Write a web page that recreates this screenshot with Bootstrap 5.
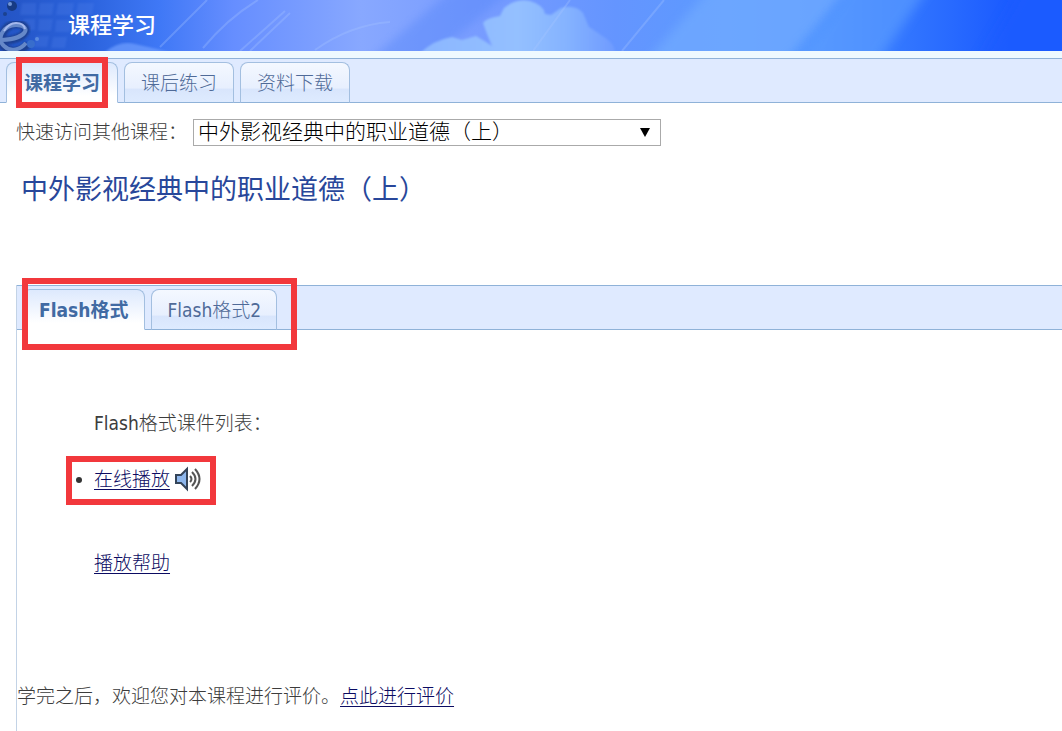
<!DOCTYPE html>
<html lang="zh-CN">
<head>
<meta charset="utf-8">
<meta name="viewport" content="width=device-width, initial-scale=1">
<title>课程学习</title>
<link href="https://cdn.jsdelivr.net/npm/bootstrap@5.3.0/dist/css/bootstrap.min.css" rel="stylesheet">
<style>
  :root { --line: #8fb2d8; --strip: #dfeaff; --ink: #416aa3; }
  body { font-family: "DejaVu Sans Condensed", "Noto Sans CJK SC", sans-serif; font-size: 19px; line-height: 28px; font-weight: 300; color: #3c3c3c; background: #fff; overflow-x: hidden; }
  a { color: #0b0b62; text-underline-offset: 3px; }
  .banner { height: 51px; background: #5c8dff; overflow: hidden; }
  .banner svg { position: absolute; inset: 0; width: 100%; height: 100%; }
  .banner h1 { font-size: 22px; line-height: 51px; font-weight: 500; padding-left: 68px; color: #fff; }
  .spacer { height: 7px; background: #eef9ff; }
  .tabstrip { background: var(--strip); border-top: 1px solid var(--line); border-bottom: 1px solid var(--line); padding: 3px 6px 0; gap: 6px; flex-wrap: nowrap; }
  .tabstrip .nav-link { height: 41px; padding: 0 16px; margin-bottom: -1px; border: 1px solid #a3bfe0; border-bottom-color: var(--line); border-radius: 8px 8px 0 0; color: #4f6a98; line-height: 40px; white-space: nowrap; background: linear-gradient(#f4f8ff 0, #e7effe 65%, #d8e5fc 66%, #deebff 100%); }
  .tabstrip .nav-link.active { padding: 0 17px; color: var(--ink); font-weight: 700; background: linear-gradient(#dde9fd, #fff 85%); border-color: #a3bfe0 #a3bfe0 #fff; }
  .marked { position: relative; }
  .marked::after { content: ""; position: absolute; z-index: 2; border: 6px solid #f2383c; pointer-events: none; }
  .mark-tab::after { inset: -5px 10px -6px 10px; }
  .mark-group::after { inset: -11px -20px -21px 0; }
  .mark-play::after { inset: -9px -14px -12px -28px; }
  .quick-form { padding: 15px 16px 0; gap: 6px; }
  .course-select { width: 468px; height: 27px; padding: 0 4px; font-size: 21px; font-weight: 300; line-height: 25px; border: 1px solid #aaa; border-radius: 0; color: #000; background: #fff url("data:image/svg+xml,%3Csvg xmlns='http://www.w3.org/2000/svg' viewBox='0 0 10 9'%3E%3Cpath d='M0 0h10L5 9z'/%3E%3C/svg%3E") no-repeat right 10px center / 10px 9px; }
  .course-title { margin: 26px 0 0 21px; font-size: 27px; line-height: 36px; font-weight: 400; color: #28479a; }
  .format-panel { margin: 77px 0 0 16px; border-left: 1px solid #c3d3e6; min-height: 446px; }
  .format-panel .tabstrip { padding-left: 5px; }
  .format-panel .tabstrip .nav-link { padding: 0 15px; }
  .format-panel .tabstrip .nav-link.active { padding: 0 16px; }
  .format-panel .marked { gap: 6px; }
  .courseware { padding: 79px 0 0 77px; }
  .courseware p { margin-bottom: 28px; }
  .courseware ul { list-style: none; padding: 0; margin-bottom: 56px; }
  .courseware li::before { content: ""; position: absolute; left: -18px; top: 12px; width: 6px; height: 6px; border-radius: 50%; background: #333; }
  .review { padding: 105px 0 0; }
</style>
</head>
<body>
<header class="banner position-relative">
  <svg viewBox="0 0 1062 51" preserveAspectRatio="none" aria-hidden="true">
    <defs>
      <linearGradient id="sky"><stop offset="0" stop-color="#2454c4"/><stop offset=".08" stop-color="#2a62dc"/><stop offset=".15" stop-color="#3f78f6"/><stop offset=".22" stop-color="#668eff"/><stop offset=".34" stop-color="#88a8ff"/><stop offset=".45" stop-color="#789cff"/><stop offset=".58" stop-color="#6495ff"/><stop offset=".7" stop-color="#5b9bff"/><stop offset=".77" stop-color="#4f93ff"/><stop offset=".84" stop-color="#3579ff"/><stop offset=".95" stop-color="#1b5bff"/><stop offset="1" stop-color="#1b5bff"/></linearGradient>
      <linearGradient id="cloud"><stop offset="0" stop-color="#8bb6ff"/><stop offset=".5" stop-color="#94c0ff"/><stop offset=".75" stop-color="#85b3ff"/><stop offset="1" stop-color="#6f9bff"/></linearGradient>
      <filter id="soft" x="-20%" width="140%"><feGaussianBlur stdDeviation="7 0"/></filter>
      <filter id="edge"><feGaussianBlur stdDeviation="1"/></filter>
    </defs>
    <path fill="url(#sky)" d="M0 0h1062v51H0z"/>
    <path fill="#6fa9ff" opacity=".8" filter="url(#soft)" d="M700 0h140l-45 51H655z"/>
    <path fill="#5a9bff" opacity=".7" filter="url(#soft)" d="M840 0h80l-35 51h-80z"/>
    <path fill="#1b5bff" opacity=".5" filter="url(#soft)" d="M1015 0h60v51H985z"/>
    <path fill="#5384f8" opacity=".4" filter="url(#soft)" d="M440 0h60l-60 51h-60z"/>
    <path fill="url(#cloud)" filter="url(#edge)" d="M420 53q14-13 32-16l10 3 14-4 10 6 6 4-5-12-4-11q3-5 17-7l4-8q12-10 26-7 14 4 15 13l6 1 10-7q14-4 22 5l6 14 12 8q14 8 14 18z"/>
    <path fill="#6f9fff" opacity=".7" filter="url(#edge)" d="M105 52q15-12 30-8l35 8z"/>
    <g stroke="#a9c6ff" stroke-width="2" opacity=".3" fill="none"><path d="M160 47 207 0M203 48q25-30 55-48M240 51l45-40M250 51l40-38M315 50q35-25 75-28M533 51l37-51M622 51l42-51"/></g>
    <g fill="#5c8af0" opacity=".22" filter="url(#edge)"><path d="M22 3h14v12H20zM40 3h14l-2 12H38zM58 3h16l-2 12H56zM78 3h16l-2 12H76zM24 19h11v11H23zM39 19h14l-2 12H38zM56 20h16l-2 12H55zM75 20h16l-2 12H73zM36 36h13l-2 11H34zM53 37h14l-2 11H51z"/></g>
    <g filter="url(#edge)"><path d="M2 41c26-1 30-16 15-17C4 24-3 40 4 47c7 7 18 4 24-3" fill="none" stroke="#1b3f92" stroke-width="8"/></g>
    <path d="M2 40c26-1 30-15 14-15C3 25-4 39 4 46c7 7 17 3 22-3" fill="none" stroke="#6688c8" stroke-width="4"/>
    <path d="M4 31q5-8 12-8 8 0 9 6" fill="none" stroke="#a5b9ed" stroke-width="2"/>
    <circle cx="12" cy="6" r="5" fill="#173b84"/><circle cx="10" cy="4" r="2" fill="#7295d5"/><circle cx="5" cy="14" r="2" fill="#1c4290"/><circle cx="31" cy="44" r="4" fill="#386dcc"/><circle cx="37" cy="39" r="2" fill="#5b8be0"/>
  </svg>
  <h1 class="position-relative mb-0">课程学习</h1>
</header>
<div class="spacer"></div>
<main>
  <nav class="nav nav-tabs tabstrip" aria-label="课程">
    <div class="marked mark-tab"><button type="button" class="nav-link active">课程学习</button></div>
    <button type="button" class="nav-link">课后练习</button>
    <button type="button" class="nav-link">资料下载</button>
  </nav>
  <form class="d-flex align-items-center quick-form">
    <label class="text-nowrap" for="course">快速访问其他课程：</label>
    <select class="form-select course-select" id="course"><option>中外影视经典中的职业道德（上）</option></select>
  </form>
  <h2 class="course-title">中外影视经典中的职业道德（上）</h2>
  <section class="format-panel">
    <div class="nav nav-tabs tabstrip">
      <div class="d-flex marked mark-group">
        <button type="button" class="nav-link active">Flash格式</button>
        <button type="button" class="nav-link">Flash格式2</button>
      </div>
    </div>
    <div class="courseware">
      <p>Flash格式课件列表：</p>
      <ul>
        <li class="marked mark-play d-inline-flex align-items-center gap-1">
          <a href="#play">在线播放</a>
          <svg width="28" height="26" viewBox="0 0 28 26" aria-hidden="true"><path d="M2 9h5l6-6v20l-6-6H2z" fill="#8eb7ed" stroke="#344459" stroke-width="2"/><path d="M16 10q3 3 0 6M18 6q7 7 0 14M21 3q9 10 0 20" fill="none" stroke="#555" stroke-width="2"/></svg>
        </li>
      </ul>
      <a href="#help">播放帮助</a>
    </div>
    <p class="review mb-0">学完之后，欢迎您对本课程进行评价。<a href="#review">点此进行评价</a></p>
  </section>
</main>
<script src="https://cdn.jsdelivr.net/npm/bootstrap@5.3.0/dist/js/bootstrap.bundle.min.js"></script>
</body>
</html>
